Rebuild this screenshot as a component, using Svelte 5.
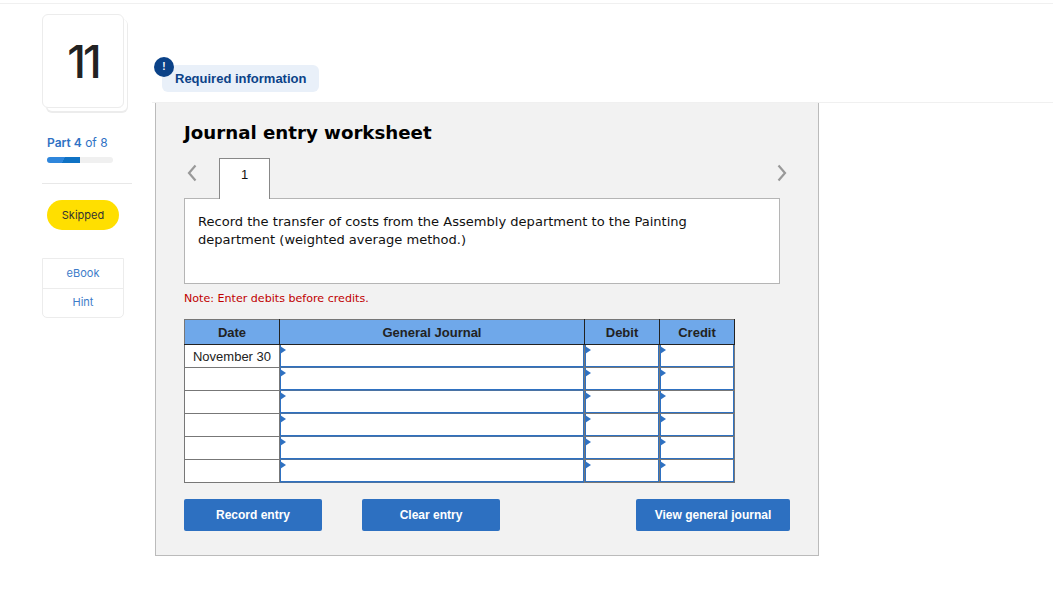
<script>
  const rows = ['November 30', '', '', '', '', '']
</script>

<div class="page">
  <aside class="side">
    <div class="num-card"><span>11</span></div>
    <div class="part"><b>Part 4</b> of 8</div>
    <div class="bar"><div class="fill"></div></div>
    <hr />
    <div class="skipped">Skipped</div>
    <div class="tools">
      <div class="tool">eBook</div>
      <div class="tool">Hint</div>
    </div>
  </aside>

  <main class="main">
    <div class="req-wrap">
      <div class="badge">!</div>
      <div class="req">Required information</div>
    </div>
    <section class="panel">
      <h2>Journal entry worksheet</h2>
      <div class="tabs">
        <svg class="chev" width="12" height="18" viewBox="0 0 12 18"><path d="M9.5 1.5 3 9l6.5 7.5" fill="none" stroke="#999" stroke-width="2.2"/></svg>
        <div class="tab">1</div>
        <svg class="chev next" width="12" height="18" viewBox="0 0 12 18"><path d="M2.5 1.5 9 9l-6.5 7.5" fill="none" stroke="#999" stroke-width="2.2"/></svg>
      </div>
      <div class="prompt">Record the transfer of costs from the Assembly department to the Painting department (weighted average method.)</div>
      <p class="note">Note: Enter debits before credits.</p>
      <table>
        <thead>
          <tr><th class="c-date">Date</th><th class="c-gj">General Journal</th><th class="c-num">Debit</th><th class="c-num">Credit</th></tr>
        </thead>
        <tbody>
          {#each rows as date}
            <tr>
              <td class="date">{date}</td>
              <td class="inp"><div class="field wide"></div></td>
              <td class="inp"><div class="field"></div></td>
              <td class="inp"><div class="field"></div></td>
            </tr>
          {/each}
        </tbody>
      </table>
      <div class="actions">
        <button>Record entry</button>
        <button class="clear">Clear entry</button>
        <button class="view">View general journal</button>
      </div>
    </section>
  </main>
</div>

<style>
  :global(body) {
    background: #fff;
    font-family: "Liberation Sans", Arial, sans-serif;
  }

  .page {
    display: flex;
    width: 1053px;
    height: 587px;
    box-sizing: border-box;
    border-top: 1px solid #f0f0f0;
    margin-top: 3px;
    overflow: hidden;
  }

  .side {
    width: 90px;
    margin-left: 42px;
    padding-top: 10px;
    flex-shrink: 0;
  }

  .num-card {
    width: 82px;
    height: 94px;
    box-sizing: border-box;
    border: 1px solid #ececec;
    border-radius: 6px;
    box-shadow: 4px 4px 0 -1px #fff, 4px 5px 0 0 #ececec;
    display: flex;
    align-items: center;
    justify-content: center;
    font-family: Inter, sans-serif;
    font-size: 45px;
    font-weight: 500;
    letter-spacing: -3px;
    color: #222;
  }

  .part {
    margin: 27px 0 0 5px;
    font-family: Inter, sans-serif;
    font-size: 12px;
    line-height: 16px;
    color: #2f72c4;
  }

  .part b { font-weight: 600; }

  .bar {
    width: 66px;
    height: 6px;
    margin: 6px 0 0 5px;
    background: #f0f0f0;
    border-radius: 3px;
    overflow: hidden;
  }

  .fill {
    width: 33px;
    height: 6px;
    background: linear-gradient(115deg, #2e86dc 50%, #0f72c4 50%);
  }

  hr {
    width: 90px;
    margin: 20px 0 0;
    border: 0;
    border-top: 1px solid #e8e8e8;
  }

  .skipped {
    width: 72px;
    height: 30px;
    margin: 16px 0 0 5px;
    background: #ffdf00;
    border-radius: 15px;
    display: flex;
    align-items: center;
    justify-content: center;
    font-family: Inter, sans-serif;
    font-size: 11px;
    color: #333;
  }

  .tools {
    width: 82px;
    margin-top: 28px;
    box-sizing: border-box;
    border: 1px solid #ececec;
    border-radius: 0 0 5px 5px;
  }

  .tool {
    height: 29px;
    box-sizing: border-box;
    padding-bottom: 2px;
    display: flex;
    align-items: center;
    justify-content: center;
    font-family: Inter, sans-serif;
    font-size: 11px;
    color: #3d7cc9;
  }

  .tool + .tool {
    height: 29px;
    border-top: 1px solid #ececec;
  }

  .main {
    margin-left: 20px;
    flex: 1;
  }

  .req-wrap {
    position: relative;
    height: 99px;
    border-bottom: 1px solid #f0f0f0;
    box-sizing: border-box;
    padding: 61px 0 0 10px;
  }

  .badge {
    position: absolute;
    left: 2px;
    top: 53px;
    width: 20px;
    height: 20px;
    border-radius: 50%;
    background: #0b4288;
    color: #fff;
    font-size: 10px;
    font-weight: 700;
    line-height: 20px;
    text-align: center;
  }

  .req {
    width: 157px;
    height: 27px;
    box-sizing: border-box;
    padding-left: 13px;
    background: #e9f0f9;
    border-radius: 6px;
    font-size: 13px;
    font-weight: 700;
    line-height: 27px;
    color: #0b4288;
  }

  .panel {
    width: 664px;
    height: 453px;
    margin-left: 3px;
    box-sizing: border-box;
    padding: 0 28px;
    background: #f2f2f2;
    border: 1px solid #bbb;
    border-top: 0;
    font-family: "DejaVu Sans", Verdana, sans-serif;
  }

  h2 {
    margin: 0;
    padding-top: 18px;
    font-size: 18.2px;
    line-height: 24px;
    font-weight: 700;
    color: #000;
  }

  .tabs {
    display: flex;
    align-items: center;
    height: 40px;
    margin-top: 13px;
  }

  .chev { margin-left: 2px; margin-top: -10px; }
  .chev.next { margin-left: 506px; }

  .tab {
    width: 51px;
    height: 41px;
    margin-left: 21px;
    box-sizing: border-box;
    padding-top: 8px;
    background: #fff;
    border: 1px solid #888;
    border-bottom: 0;
    text-align: center;
    font-family: "Liberation Sans", Arial, sans-serif;
    font-size: 13px;
    line-height: 16px;
    color: #111;
    position: relative;
    z-index: 1;
  }

  .prompt {
    width: 596px;
    height: 86px;
    box-sizing: border-box;
    padding: 14px 13px;
    background: #fff;
    border: 1px solid #b5b5b5;
    font-size: 13.05px;
    line-height: 18px;
    color: #111;
  }

  .note {
    margin: 8px 0 0;
    font-size: 11.1px;
    line-height: 14px;
    color: #c00000;
  }

  table {
    margin-top: 13px;
    width: 550px;
    border-collapse: collapse;
    table-layout: fixed;
    font-family: "Liberation Sans", Arial, sans-serif;
    font-size: 13px;
    background: #fff;
  }

  th {
    height: 25px;
    padding: 1px 0 0;
    box-sizing: border-box;
    background: #6fa8ea;
    border: 1px solid #222;
    border-top-color: #777;
    font-weight: 700;
    color: #222;
  }

  th:first-child { border-left-color: #777; }

  .c-date { width: 95px; }
  .c-gj { width: 305px; }
  .c-num { width: 75px; }

  td {
    height: 23px;
    padding: 0;
    box-sizing: border-box;
    border: 1px solid #777;
  }

  .date {
    padding-top: 1px;
    text-align: center;
    color: #222;
  }

  .inp { vertical-align: top; }

  .field {
    position: relative;
    height: 22px;
    box-sizing: border-box;
    border-left: 1px solid #2f71c1;
    border-right: 1px solid #2f71c1;
    border-bottom: 1px solid #2f71c1;
    background: #fff;
  }

  .field.wide { box-shadow: 0 1px 0 rgba(47, 113, 193, 0.6); }

  .field::before {
    content: '';
    position: absolute;
    left: -1px;
    top: 1px;
    border-left: 6px solid #2f71c1;
    border-top: 4px solid transparent;
    border-bottom: 4px solid transparent;
  }

  .actions {
    display: flex;
    margin-top: 16px;
  }

  button {
    width: 138px;
    height: 32px;
    padding: 0;
    border: 0;
    border-radius: 2px;
    background: #2d70c1;
    color: #fff;
    font-family: "Liberation Sans", Arial, sans-serif;
    font-size: 12px;
    font-weight: 700;
  }

  .clear { margin-left: 40px; }
  .view { width: 154px; margin-left: 136px; }
</style>
